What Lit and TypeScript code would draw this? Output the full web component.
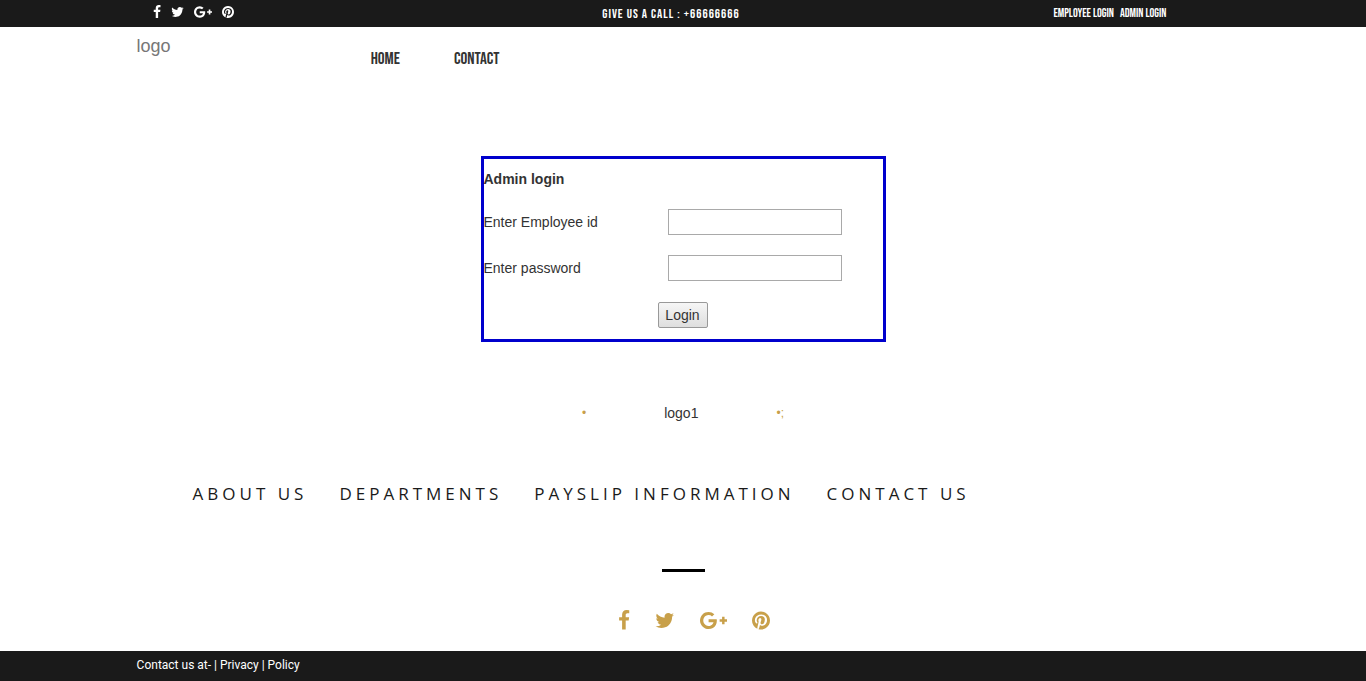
import { LitElement, html, css, svg } from "lit";
import { customElement } from "lit/decorators.js";

const GLYPHS = [
  {
    name: "Facebook",
    box: "384 0 1024 1792",
    path: "M1343 12v264h-157q-86 0-116 36t-30 108v189h293l-39 296h-254v759h-306v-759h-255v-296h255v-218q0-186 104-288.500t277-102.500q147 0 228 12z",
  },
  {
    name: "Twitter",
    box: "64 0 1664 1792",
    path: "M1684 408q-67 98-162 167 1 14 1 42 0 130-38 259.500t-115.500 248.500-184.500 210.500-258 146-323 54.500q-271 0-496-145 35 4 78 4 225 0 401-138-105-2-188-64.500t-114-159.500q33 5 61 5 43 0 85-11-112-23-185.500-111.500t-73.500-205.500v-4q68 38 146 41-66-44-105-115t-39-154q0-88 44-163 121 149 294.500 238.500t371.500 99.500q-8-38-8-74 0-134 94.500-228.500t228.500-94.500q140 0 236 102 109-21 205-78-37 115-142 178 93-10 186-50z",
  },
  {
    name: "Google Plus",
    box: "0 0 2304 1792",
    path: "M1437 913q0 208-87 370.500t-248 254-369 91.500q-149 0-285-58t-234-156-156-234-58-285 58-285 156-234 234-156 285-58q286 0 491 192l-199 191q-117-113-292-113-123 0-227.500 62t-165.500 168.500-61 232.500 61 232.500 165.500 168.500 227.500 62q83 0 152.500-23t114.500-57.500 78.500-78.500 49-83 21.500-74h-416v-252h692q12 63 12 122zm867-122v210h-209v209h-210v-209h-209v-210h209v-209h210v209h209z",
  },
  {
    name: "Pinterest",
    box: "128 0 1536 1792",
    path: "M1664 896q0 209-103 385.500t-279.500 279.500-385.500 103q-111 0-218-32 59-93 78-164 9-34 54-211 20 39 73 67.500t114 28.500q121 0 216-68.500t147-188.500 52-270q0-114-59.500-214t-172.500-163-255-63q-105 0-196 29t-154.500 77-109 110.500-67 129.500-21.500 134q0 104 40 183t117 111q30 12 38-20 2-7 8-31t8-30q6-23-11-43-51-61-51-151 0-151 104.500-259.500t273.500-108.500q151 0 235.500 82t84.500 213q0 170-68.500 289t-175.500 119q-61 0-98-43.500t-23-104.500q8-35 26.500-93.500t30-103 11.500-75.500q0-50-27-83t-77-33q-62 0-105 57t-43 142q0 73 25 122l-99 418q-17 70-13 177-206-91-333-281t-127-423q0-209 103-385.500t279.500-279.500 385.500-103 385.500 103 279.500 279.500 103 385.500z",
  },
];

@customElement("social-links")
class SocialLinks extends LitElement {
  static styles = css`
    :host {
      display: flex;
      align-items: center;
      gap: var(--social-gap, 10px);
    }
    .link {
      display: block;
      color: inherit;
    }
    .glyph {
      display: block;
      height: var(--social-size, 14px);
      width: auto;
      fill: currentColor;
    }
  `;

  render() {
    return GLYPHS.map(
      (g) => html`<a class="link" href="#" aria-label=${g.name}>
        <svg class="glyph" viewBox=${g.box} aria-hidden="true">${svg`<path d=${g.path}></path>`}</svg>
      </a>`
    );
  }
}

@customElement("app-root")
class AppRoot extends LitElement {
  static styles = css`
    :host {
      display: flex;
      flex-direction: column;
      min-height: 100vh;
      background: #fff;
      color: #333;
      font: 14px/20px "Liberation Sans", Arial, sans-serif;
    }
    a {
      color: inherit;
      text-decoration: none;
    }
    .wrap {
      width: 80%;
      margin: 0 auto;
    }
    .topbar,
    .bottom {
      background: #1a1a1a;
      color: #fff;
    }
    .bar {
      display: grid;
      grid-template-columns: 1fr 1fr 1fr;
      align-items: center;
      height: 27px;
      font-family: "Bebas Neue", "Roboto Condensed", Roboto, sans-serif;
    }
    .bar-social {
      padding: 0 16px 3px;
    }
    .call {
      padding-right: 24px;
      text-align: center;
      font-size: 13px;
      letter-spacing: 1px;
    }
    .logins {
      display: flex;
      justify-content: flex-end;
      gap: 6px;
      padding-right: 63px;
      font-size: 12px;
    }
    .header {
      display: flex;
      align-items: flex-start;
      gap: 200px;
      padding-top: 7px;
    }
    .logo {
      color: #777;
      font-size: 18px;
      line-height: 24px;
    }
    .menu {
      display: flex;
      gap: 54px;
      padding-top: 15px;
      font: 17px/20px "Bebas Neue", "Roboto Condensed", Roboto, sans-serif;
    }
    .login {
      display: grid;
      grid-template-columns: 184px 174px;
      row-gap: 20px;
      align-items: center;
      box-sizing: border-box;
      width: 405px;
      max-width: 100%;
      margin: 87px auto 0;
      padding: 10px 0 11px;
      border: 3px solid #0000cd;
    }
    .title {
      grid-column: 1 / -1;
      margin: 0;
      font-size: 14px;
      line-height: 20px;
    }
    .field {
      box-sizing: border-box;
      width: 100%;
      height: 26px;
      border: 1px solid #a9a9a9;
      background: #fff;
      font: inherit;
    }
    .submit {
      grid-column: 1 / -1;
      justify-self: start;
      box-sizing: border-box;
      width: 50px;
      height: 26px;
      margin: 1px 0 0 174px;
      padding: 0;
      border: 1px solid #999;
      border-radius: 2px;
      background: linear-gradient(#f6f6f6, #dedede);
      color: #333;
      font: inherit;
    }
    .brand {
      display: flex;
      justify-content: center;
      gap: 78px;
      margin-top: 61px;
    }
    .dot {
      color: #c8a04a;
      font-size: 12px;
    }
    .sections {
      display: flex;
      flex-wrap: wrap;
      gap: 32px;
      padding: 61px 56px 0;
      color: #1a1a1a;
      font: 400 17px/20px "Open Sans", sans-serif;
      letter-spacing: 4px;
    }
    .rule {
      width: 43px;
      height: 3px;
      margin: 65px auto 0;
      border: 0;
      background: #000;
    }
    .social {
      --social-size: 21px;
      --social-gap: 25px;
      justify-content: center;
      margin: 38px 0 20px;
      padding-left: 22px;
      color: #c8a04a;
    }
    .bottom {
      margin-top: auto;
    }
    .legal {
      padding: 4px 0 6px;
      font-family: Roboto, sans-serif;
      font-size: 12px;
    }
  `;

  render() {
    return html`
      <header>
        <div class="topbar">
          <div class="wrap bar">
            <social-links class="bar-social"></social-links>
            <span class="call">GIVE US A CALL : +66666666</span>
            <nav class="logins" aria-label="Login">
              <a href="#">EMPLOYEE LOGIN</a>
              <a href="#">ADMIN LOGIN</a>
            </nav>
          </div>
        </div>
        <div class="wrap header">
          <a class="logo" href="#">logo</a>
          <nav class="menu" aria-label="Main">
            <a href="#">HOME</a>
            <a href="#">CONTACT</a>
          </nav>
        </div>
      </header>
      <main>
        <form class="login" @submit=${(e: Event) => e.preventDefault()}>
          <h1 class="title">Admin login</h1>
          <label for="employee">Enter Employee id</label>
          <input class="field" id="employee" type="text" />
          <label for="password">Enter password</label>
          <input class="field" id="password" type="password" />
          <button class="submit" type="submit">Login</button>
        </form>
      </main>
      <footer>
        <div class="brand">
          <span class="dot">•</span>
          <span>logo1</span>
          <span class="dot">•;</span>
        </div>
        <nav class="wrap" aria-label="Sections">
          <div class="sections">
            <a href="#">ABOUT US</a>
            <a href="#">DEPARTMENTS</a>
            <a href="#">PAYSLIP INFORMATION</a>
            <a href="#">CONTACT US</a>
          </div>
        </nav>
        <hr class="rule" />
        <social-links class="social"></social-links>
      </footer>
      <div class="bottom">
        <div class="wrap legal">
          Contact us at- | <a href="#">Privacy</a> | <a href="#">Policy</a>
        </div>
      </div>
    `;
  }
}
